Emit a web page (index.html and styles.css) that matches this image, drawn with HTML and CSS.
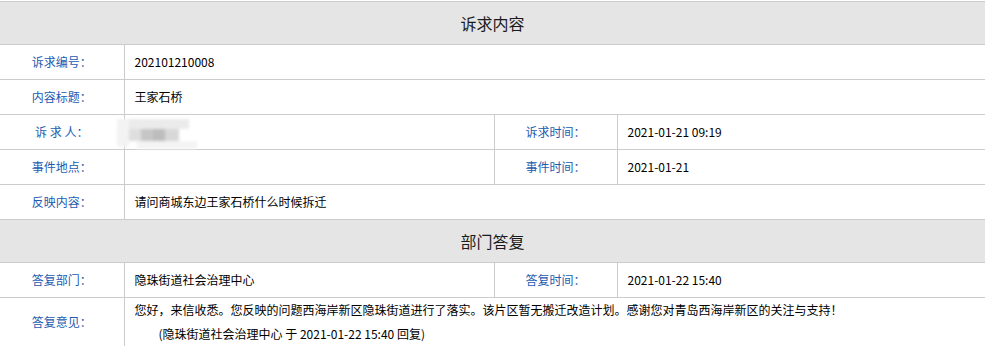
FILE: index.html
```html
<!DOCTYPE html>
<html lang="zh">
<head>
<meta charset="utf-8">
<link rel="stylesheet" href="styles.css">
</head>
<body>
<div class="wrap">
<table class="detail">
  <colgroup>
    <col class="c-label"><col class="c-value"><col class="c-label2"><col>
  </colgroup>
  <tr class="head"><th colspan="4">诉求内容</th></tr>
  <tr><td class="label">诉求编号：</td><td class="value" colspan="3">202101210008</td></tr>
  <tr><td class="label">内容标题：</td><td class="value" colspan="3">王家石桥</td></tr>
  <tr><td class="label">诉&nbsp;求&nbsp;人：</td><td class="value masked"><div class="mosaic"><span class="m1"></span><span class="m2"></span><span class="m3"></span><span class="m4"></span><span class="m5"></span><span class="m6"></span><span class="m7"></span></div></td><td class="label">诉求时间：</td><td class="value">2021-01-21 09:19</td></tr>
  <tr><td class="label">事件地点：</td><td class="value"></td><td class="label">事件时间：</td><td class="value">2021-01-21</td></tr>
  <tr><td class="label">反映内容：</td><td class="value" colspan="3">请问商城东边王家石桥什么时候拆迁</td></tr>
  <tr class="head"><th colspan="4">部门答复</th></tr>
  <tr><td class="label">答复部门：</td><td class="value">隐珠街道社会治理中心</td><td class="label">答复时间：</td><td class="value">2021-01-22 15:40</td></tr>
  <tr class="tall"><td class="label">答复意见：</td><td class="value reply" colspan="3">您好，来信收悉。您反映的问题西海岸新区隐珠街道进行了落实。该片区暂无搬迁改造计划。感谢您对青岛西海岸新区的关注与支持！<div class="sign">(隐珠街道社会治理中心 于 2021-01-22 15:40 回复)</div></td></tr>
</table>
</div>
</body>
</html>
```
FILE: styles.css
```css
html, body {
  margin: 0;
  padding: 0;
  background: #fff;
}
body {
  font-family: "Noto Sans CJK SC", "Noto Sans", sans-serif;
  font-size: 12px;
  color: #000;
  overflow: hidden;
}
.wrap {
  padding-top: 1px;
  width: 985px;
}
.detail {
  width: 985px;
  border-collapse: collapse;
  table-layout: fixed;
}
.c-label { width: 124px; }
.c-value { width: 370px; }
.c-label2 { width: 123px; }
.detail th, .detail td {
  border-top: 1px solid #cccccc;
  border-bottom: 1px solid #cccccc;
  padding: 0;
}
.detail td + td, .detail th + th {
  border-left: 1px solid #cccccc;
}
.head th {
  background: #e5e5e5;
  height: 42px;
  font-size: 16px;
  font-weight: normal;
  color: #1a1a1a;
  text-align: center;
  line-height: 20px;
}
.detail td {
  height: 34px;
  line-height: 20px;
}
.label {
  text-align: center;
  color: #1c5cb0;
  font-family: "Noto Sans CJK JP", "Noto Sans CJK SC", sans-serif;
}
.value {
  padding-left: 10px !important;
  text-align: left;
}
.tall td {
  height: 48px;
  line-height: 24px;
}
.reply {
  vertical-align: top;
}
.sign {
  padding-left: 24px;
}
.masked {
  position: relative;
}
.mosaic {
  position: absolute;
  left: -8px;
  top: 1px;
  width: 90px;
  height: 36px;
  filter: blur(1.5px);
}
.mosaic span {
  position: absolute;
  display: block;
}
.m1 { left: 0; top: 3px; width: 12px; height: 28px; background: #f3f3f3; }
.m2 { left: 12px; top: 3px; width: 60px; height: 10px; background: #ebebeb; }
.m3 { left: 12px; top: 13px; width: 12px; height: 12px; background: #dedede; }
.m4 { left: 24px; top: 13px; width: 12px; height: 12px; background: #c6c6c6; }
.m5 { left: 36px; top: 13px; width: 12px; height: 12px; background: #bdbdbd; }
.m6 { left: 48px; top: 13px; width: 14px; height: 12px; background: #d8d8d8; }
.m7 { left: 20px; top: 25px; width: 60px; height: 8px; background: #f4f4f4; }
```
